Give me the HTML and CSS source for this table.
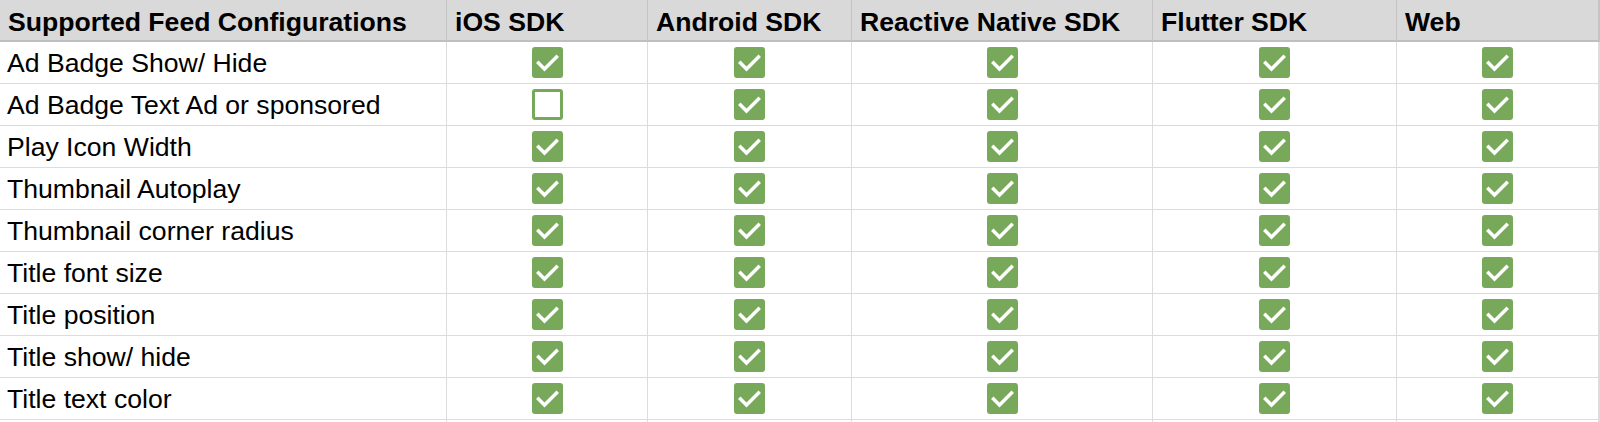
FILE: index.html
```html
<!DOCTYPE html>
<html>
<head>
<meta charset="utf-8">
<link rel="stylesheet" href="styles.css">
</head>
<body>
<div class="sheet">
  <div class="cell head">Supported Feed Configurations</div>
  <div class="cell head">iOS SDK</div>
  <div class="cell head">Android SDK</div>
  <div class="cell head">Reactive Native SDK</div>
  <div class="cell head">Flutter SDK</div>
  <div class="cell head">Web</div>

  <div class="cell label">Ad Badge Show/ Hide</div>
  <div class="cell box"><span class="cb on"><svg viewBox="0 0 31 31"><polyline points="6.5,16 12.5,22 24.5,10"/></svg></span></div>
  <div class="cell box"><span class="cb on"><svg viewBox="0 0 31 31"><polyline points="6.5,16 12.5,22 24.5,10"/></svg></span></div>
  <div class="cell box"><span class="cb on"><svg viewBox="0 0 31 31"><polyline points="6.5,16 12.5,22 24.5,10"/></svg></span></div>
  <div class="cell box"><span class="cb on"><svg viewBox="0 0 31 31"><polyline points="6.5,16 12.5,22 24.5,10"/></svg></span></div>
  <div class="cell box"><span class="cb on"><svg viewBox="0 0 31 31"><polyline points="6.5,16 12.5,22 24.5,10"/></svg></span></div>

  <div class="cell label">Ad Badge Text Ad or sponsored</div>
  <div class="cell box"><span class="cb off"></span></div>
  <div class="cell box"><span class="cb on"><svg viewBox="0 0 31 31"><polyline points="6.5,16 12.5,22 24.5,10"/></svg></span></div>
  <div class="cell box"><span class="cb on"><svg viewBox="0 0 31 31"><polyline points="6.5,16 12.5,22 24.5,10"/></svg></span></div>
  <div class="cell box"><span class="cb on"><svg viewBox="0 0 31 31"><polyline points="6.5,16 12.5,22 24.5,10"/></svg></span></div>
  <div class="cell box"><span class="cb on"><svg viewBox="0 0 31 31"><polyline points="6.5,16 12.5,22 24.5,10"/></svg></span></div>

  <div class="cell label">Play Icon Width</div>
  <div class="cell box"><span class="cb on"><svg viewBox="0 0 31 31"><polyline points="6.5,16 12.5,22 24.5,10"/></svg></span></div>
  <div class="cell box"><span class="cb on"><svg viewBox="0 0 31 31"><polyline points="6.5,16 12.5,22 24.5,10"/></svg></span></div>
  <div class="cell box"><span class="cb on"><svg viewBox="0 0 31 31"><polyline points="6.5,16 12.5,22 24.5,10"/></svg></span></div>
  <div class="cell box"><span class="cb on"><svg viewBox="0 0 31 31"><polyline points="6.5,16 12.5,22 24.5,10"/></svg></span></div>
  <div class="cell box"><span class="cb on"><svg viewBox="0 0 31 31"><polyline points="6.5,16 12.5,22 24.5,10"/></svg></span></div>

  <div class="cell label">Thumbnail Autoplay</div>
  <div class="cell box"><span class="cb on"><svg viewBox="0 0 31 31"><polyline points="6.5,16 12.5,22 24.5,10"/></svg></span></div>
  <div class="cell box"><span class="cb on"><svg viewBox="0 0 31 31"><polyline points="6.5,16 12.5,22 24.5,10"/></svg></span></div>
  <div class="cell box"><span class="cb on"><svg viewBox="0 0 31 31"><polyline points="6.5,16 12.5,22 24.5,10"/></svg></span></div>
  <div class="cell box"><span class="cb on"><svg viewBox="0 0 31 31"><polyline points="6.5,16 12.5,22 24.5,10"/></svg></span></div>
  <div class="cell box"><span class="cb on"><svg viewBox="0 0 31 31"><polyline points="6.5,16 12.5,22 24.5,10"/></svg></span></div>

  <div class="cell label">Thumbnail corner radius</div>
  <div class="cell box"><span class="cb on"><svg viewBox="0 0 31 31"><polyline points="6.5,16 12.5,22 24.5,10"/></svg></span></div>
  <div class="cell box"><span class="cb on"><svg viewBox="0 0 31 31"><polyline points="6.5,16 12.5,22 24.5,10"/></svg></span></div>
  <div class="cell box"><span class="cb on"><svg viewBox="0 0 31 31"><polyline points="6.5,16 12.5,22 24.5,10"/></svg></span></div>
  <div class="cell box"><span class="cb on"><svg viewBox="0 0 31 31"><polyline points="6.5,16 12.5,22 24.5,10"/></svg></span></div>
  <div class="cell box"><span class="cb on"><svg viewBox="0 0 31 31"><polyline points="6.5,16 12.5,22 24.5,10"/></svg></span></div>

  <div class="cell label">Title font size</div>
  <div class="cell box"><span class="cb on"><svg viewBox="0 0 31 31"><polyline points="6.5,16 12.5,22 24.5,10"/></svg></span></div>
  <div class="cell box"><span class="cb on"><svg viewBox="0 0 31 31"><polyline points="6.5,16 12.5,22 24.5,10"/></svg></span></div>
  <div class="cell box"><span class="cb on"><svg viewBox="0 0 31 31"><polyline points="6.5,16 12.5,22 24.5,10"/></svg></span></div>
  <div class="cell box"><span class="cb on"><svg viewBox="0 0 31 31"><polyline points="6.5,16 12.5,22 24.5,10"/></svg></span></div>
  <div class="cell box"><span class="cb on"><svg viewBox="0 0 31 31"><polyline points="6.5,16 12.5,22 24.5,10"/></svg></span></div>

  <div class="cell label">Title position</div>
  <div class="cell box"><span class="cb on"><svg viewBox="0 0 31 31"><polyline points="6.5,16 12.5,22 24.5,10"/></svg></span></div>
  <div class="cell box"><span class="cb on"><svg viewBox="0 0 31 31"><polyline points="6.5,16 12.5,22 24.5,10"/></svg></span></div>
  <div class="cell box"><span class="cb on"><svg viewBox="0 0 31 31"><polyline points="6.5,16 12.5,22 24.5,10"/></svg></span></div>
  <div class="cell box"><span class="cb on"><svg viewBox="0 0 31 31"><polyline points="6.5,16 12.5,22 24.5,10"/></svg></span></div>
  <div class="cell box"><span class="cb on"><svg viewBox="0 0 31 31"><polyline points="6.5,16 12.5,22 24.5,10"/></svg></span></div>

  <div class="cell label">Title show/ hide</div>
  <div class="cell box"><span class="cb on"><svg viewBox="0 0 31 31"><polyline points="6.5,16 12.5,22 24.5,10"/></svg></span></div>
  <div class="cell box"><span class="cb on"><svg viewBox="0 0 31 31"><polyline points="6.5,16 12.5,22 24.5,10"/></svg></span></div>
  <div class="cell box"><span class="cb on"><svg viewBox="0 0 31 31"><polyline points="6.5,16 12.5,22 24.5,10"/></svg></span></div>
  <div class="cell box"><span class="cb on"><svg viewBox="0 0 31 31"><polyline points="6.5,16 12.5,22 24.5,10"/></svg></span></div>
  <div class="cell box"><span class="cb on"><svg viewBox="0 0 31 31"><polyline points="6.5,16 12.5,22 24.5,10"/></svg></span></div>

  <div class="cell label">Title text color</div>
  <div class="cell box"><span class="cb on"><svg viewBox="0 0 31 31"><polyline points="6.5,16 12.5,22 24.5,10"/></svg></span></div>
  <div class="cell box"><span class="cb on"><svg viewBox="0 0 31 31"><polyline points="6.5,16 12.5,22 24.5,10"/></svg></span></div>
  <div class="cell box"><span class="cb on"><svg viewBox="0 0 31 31"><polyline points="6.5,16 12.5,22 24.5,10"/></svg></span></div>
  <div class="cell box"><span class="cb on"><svg viewBox="0 0 31 31"><polyline points="6.5,16 12.5,22 24.5,10"/></svg></span></div>
  <div class="cell box"><span class="cb on"><svg viewBox="0 0 31 31"><polyline points="6.5,16 12.5,22 24.5,10"/></svg></span></div>

  <div class="cell label"></div>
  <div class="cell box"></div>
  <div class="cell box"></div>
  <div class="cell box"></div>
  <div class="cell box"></div>
  <div class="cell box"></div>
</div>
</body>
</html>
```

FILE: styles.css
```css
html, body {
  margin: 0;
  padding: 0;
  background: #ffffff;
  overflow: hidden;
}

.sheet {
  display: grid;
  grid-template-columns: 447px 201px 204px 301px 244px 203px;
  font-family: "Liberation Sans", Arial, sans-serif;
  font-size: 26.6px;
  color: #000000;
}

.cell {
  box-sizing: border-box;
  height: 42px;
  border-right: 1px solid #dcdcdc;
  border-bottom: 1px solid #dcdcdc;
  display: flex;
  align-items: center;
  white-space: nowrap;
  overflow: hidden;
}

.cell:nth-child(6n) {
  border-right: 2px solid #dcdcdc;
}

.head {
  background: #d9d9d9;
  font-weight: bold;
  border-right-color: #c4c4c4;
  border-bottom: 2px solid #bfbfbf;
  padding: 4px 0 0 8px;
}

.head:nth-child(6n) {
  border-right-color: #c4c4c4;
}

.label {
  padding: 2px 0 0 7px;
}

.box {
  justify-content: center;
}

.cb {
  box-sizing: border-box;
  width: 31px;
  height: 31px;
  border-radius: 3px;
  display: block;
}

.cb.on {
  background: #78a95a;
}

.cb.off {
  background: #ffffff;
  border: 3px solid #78a95a;
}

.cb svg {
  display: block;
  width: 31px;
  height: 31px;
}

.cb polyline {
  fill: none;
  stroke: #ffffff;
  stroke-width: 3.5;
  stroke-linecap: square;
  stroke-linejoin: miter;
}
```
